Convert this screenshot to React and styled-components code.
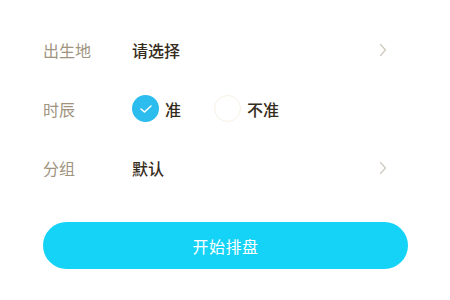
import styled, { createGlobalStyle } from 'styled-components';

const GlobalStyle = createGlobalStyle`
  html, body {
    margin: 0;
    padding: 0;
    background: #ffffff;
    overflow: hidden;
  }
  body {
    font-family: "Noto Sans CJK SC", "Noto Sans", sans-serif;
  }
`;

const Page = styled.div`
  width: 450px;
  height: 300px;
  background: #fff;
  padding: 0 42px 0 43px;
  box-sizing: border-box;
  overflow: hidden;
`;

const List = styled.div`
  display: flex;
  flex-direction: column;
  margin-top: -39px;
`;

const Row = styled.div`
  display: flex;
  align-items: center;
  height: 59px;
`;

const Label = styled.div`
  width: 89px;
  flex-shrink: 0;
  font-size: 16px;
  color: #a0947f;
`;

const Value = styled.div`
  flex: 1;
  font-size: 16px;
  font-weight: 500;
  color: ${(p) => (p.$faint ? '#b9ad98' : '#352c20')};
`;

const Chevron = styled.svg`
  width: 8px;
  height: 14px;
  margin-right: 21px;
  flex-shrink: 0;
`;

const Options = styled.div`
  display: flex;
  align-items: center;
  gap: 7px;
  flex: 1;
`;

const Option = styled.div`
  display: flex;
  align-items: center;
  gap: 6px;
  margin-right: ${(p) => (p.$gap ? '26px' : '0')};
  font-size: 16px;
  font-weight: 500;
  color: #352c20;
`;

const Radio = styled.div`
  width: 27px;
  height: 27px;
  border-radius: 50%;
  box-sizing: border-box;
  display: flex;
  align-items: center;
  justify-content: center;
  background: ${(p) => (p.$checked ? '#2cbcee' : '#fff')};
  border: ${(p) => (p.$checked ? 'none' : '1px solid #f6f1e4')};
`;

const StartButton = styled.button`
  display: flex;
  align-items: center;
  justify-content: center;
  width: 100%;
  height: 47px;
  margin-top: 25px;
  border: none;
  border-radius: 24px;
  background: #14d3f7;
  color: #fff;
  font-family: inherit;
  font-size: 16px;
  letter-spacing: 0.5px;
`;

function Arrow() {
  return (
    <Chevron viewBox="0 0 8 14">
      <polyline points="1.5,1.5 6.5,7 1.5,12.5" fill="none" stroke="#cfcac0" strokeWidth="1.3" strokeLinecap="round" strokeLinejoin="round" />
    </Chevron>
  );
}

export default function App() {
  return (
    <Page>
      <GlobalStyle />
      <List>
        <Row>
          <Label>日期</Label>
          <Value $faint>公历 1990年01月01日 00:00</Value>
          <Arrow />
        </Row>
        <Row>
          <Label>出生地</Label>
          <Value>请选择</Value>
          <Arrow />
        </Row>
        <Row>
          <Label>时辰</Label>
          <Options>
            <Option $gap>
              <Radio $checked>
                <svg width="14" height="10" viewBox="0 0 14 10">
                  <polyline points="2,5 5.5,8 12,2" fill="none" stroke="#fff" strokeWidth="1.6" strokeLinecap="round" strokeLinejoin="round" />
                </svg>
              </Radio>
              准
            </Option>
            <Option>
              <Radio />
              不准
            </Option>
          </Options>
        </Row>
        <Row>
          <Label>分组</Label>
          <Value>默认</Value>
          <Arrow />
        </Row>
      </List>
      <StartButton>开始排盘</StartButton>
    </Page>
  );
}
